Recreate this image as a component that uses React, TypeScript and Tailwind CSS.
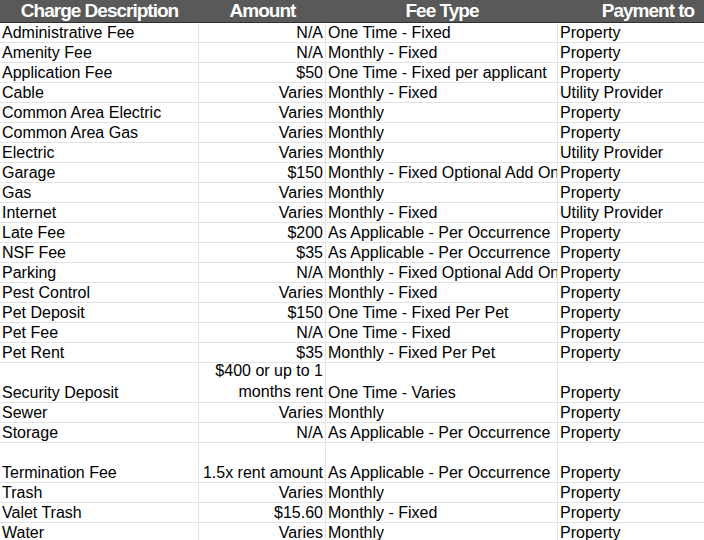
import React from 'react'

type Row = {
  name: string
  amount: string
  feeType: string
  payTo: string
  tall?: boolean
}

const rows: Row[] = [
  { name: 'Administrative Fee', amount: 'N/A', feeType: 'One Time - Fixed', payTo: 'Property' },
  { name: 'Amenity Fee', amount: 'N/A', feeType: 'Monthly - Fixed', payTo: 'Property' },
  { name: 'Application Fee', amount: '$50', feeType: 'One Time - Fixed per applicant', payTo: 'Property' },
  { name: 'Cable', amount: 'Varies', feeType: 'Monthly - Fixed', payTo: 'Utility Provider' },
  { name: 'Common Area Electric', amount: 'Varies', feeType: 'Monthly', payTo: 'Property' },
  { name: 'Common Area Gas', amount: 'Varies', feeType: 'Monthly', payTo: 'Property' },
  { name: 'Electric', amount: 'Varies', feeType: 'Monthly', payTo: 'Utility Provider' },
  { name: 'Garage', amount: '$150', feeType: 'Monthly - Fixed Optional Add On', payTo: 'Property' },
  { name: 'Gas', amount: 'Varies', feeType: 'Monthly', payTo: 'Property' },
  { name: 'Internet', amount: 'Varies', feeType: 'Monthly - Fixed', payTo: 'Utility Provider' },
  { name: 'Late Fee', amount: '$200', feeType: 'As Applicable - Per Occurrence', payTo: 'Property' },
  { name: 'NSF Fee', amount: '$35', feeType: 'As Applicable - Per Occurrence', payTo: 'Property' },
  { name: 'Parking', amount: 'N/A', feeType: 'Monthly - Fixed Optional Add On', payTo: 'Property' },
  { name: 'Pest Control', amount: 'Varies', feeType: 'Monthly - Fixed', payTo: 'Property' },
  { name: 'Pet Deposit', amount: '$150', feeType: 'One Time - Fixed Per Pet', payTo: 'Property' },
  { name: 'Pet Fee', amount: 'N/A', feeType: 'One Time - Fixed', payTo: 'Property' },
  { name: 'Pet Rent', amount: '$35', feeType: 'Monthly - Fixed Per Pet', payTo: 'Property' },
  { name: 'Security Deposit', amount: '$400 or up to 1 months rent', feeType: 'One Time - Varies', payTo: 'Property', tall: true },
  { name: 'Sewer', amount: 'Varies', feeType: 'Monthly', payTo: 'Property' },
  { name: 'Storage', amount: 'N/A', feeType: 'As Applicable - Per Occurrence', payTo: 'Property' },
  { name: 'Termination Fee', amount: '1.5x rent amount', feeType: 'As Applicable - Per Occurrence', payTo: 'Property', tall: true },
  { name: 'Trash', amount: 'Varies', feeType: 'Monthly', payTo: 'Property' },
  { name: 'Valet Trash', amount: '$15.60', feeType: 'Monthly - Fixed', payTo: 'Property' },
  { name: 'Water', amount: 'Varies', feeType: 'Monthly', payTo: 'Property' },
]

const cell = 'flex items-end overflow-hidden border-r border-b border-[#e2e2e2] px-[2px] leading-[19px]'

export default function App() {
  return (
    <div className="w-[704px] h-[540px] overflow-hidden bg-white text-black text-[16px] font-['Liberation_Sans',Arial,sans-serif]">
      <div className="w-[738px]">
        {/* Header */}
        <div className="grid grid-cols-[199px_127px_232px_180px] h-[23px] bg-[#595959] border-b border-[#2f2f2f] text-white font-bold text-[19px] tracking-[-1px] leading-[22px]">
          <div className="text-center">Charge Description</div>
          <div className="text-center">Amount</div>
          <div className="text-center">Fee Type</div>
          <div className="text-center">Payment to</div>
        </div>

        {/* Rows */}
        {rows.map((r) => (
          <div
            key={r.name}
            className={`grid grid-cols-[199px_127px_232px_180px] ${r.tall ? 'h-[40px]' : 'h-[20px]'}`}
          >
            <div className={`${cell} whitespace-nowrap`}>{r.name}</div>
            <div className={`${cell} justify-end text-right ${r.tall && r.name === 'Security Deposit' ? 'leading-[21px]' : 'whitespace-nowrap'}`}>
              {r.name === 'Security Deposit' ? (
                <span>
                  $400 or up to 1<br />months rent
                </span>
              ) : (
                r.amount
              )}
            </div>
            <div className={`${cell} whitespace-nowrap`}>{r.feeType}</div>
            <div className={`${cell} whitespace-nowrap`}>{r.payTo}</div>
          </div>
        ))}
      </div>
    </div>
  )
}
